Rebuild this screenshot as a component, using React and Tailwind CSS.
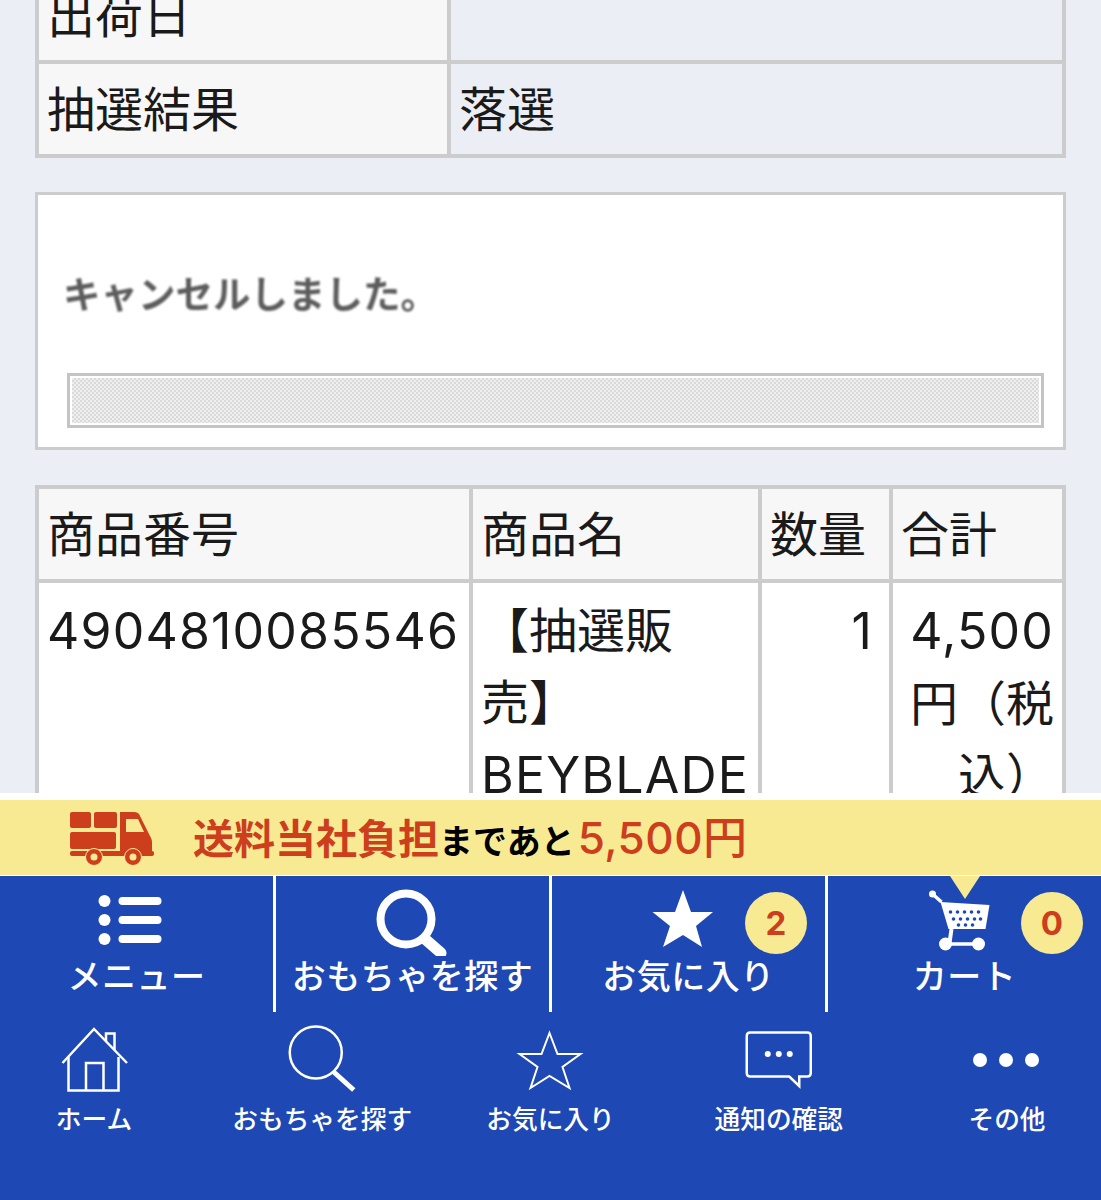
import React from 'react';

const cell = 'border-[4px] border-[#cccccc] px-[8px] align-top';
const latin = 'text-[50px] tracking-[1.2px]';

function TruckIcon() {
    return (
        <svg width="90" height="56" viewBox="67 810 90 56" fill="#cc3e1c">
            <rect x="70" y="812" width="21" height="16" rx="2" />
            <rect x="94" y="812" width="23" height="16" rx="2" />
            <rect x="70" y="832" width="46" height="17" rx="2" />
            <path d="M120 812h14c3 0 5 1 6 4l11 22c1 2 1 4 1 6v9h-32zM126 819v13h18l-6-13z" fillRule="evenodd" />
            <rect x="70" y="851" width="84" height="5" rx="2" />
            <circle cx="94" cy="857" r="8.5" fill="#cc3e1c" stroke="#f7ea93" strokeWidth="1" />
            <circle cx="94" cy="857" r="3.5" fill="#f7ea93" />
            <circle cx="133" cy="857" r="8.5" fill="#cc3e1c" stroke="#f7ea93" strokeWidth="1" />
            <circle cx="133" cy="857" r="3.5" fill="#f7ea93" />
        </svg>
    );
}

function ListIcon() {
    return (
        <svg width="80" height="76" viewBox="96.5 880 80 76" fill="white">
            <circle cx="104" cy="901" r="6" />
            <circle cx="104" cy="920" r="6" />
            <circle cx="104" cy="939" r="6" />
            <rect x="118" y="897" width="43" height="8" rx="4" />
            <rect x="118" y="916" width="43" height="8" rx="4" />
            <rect x="118" y="935" width="43" height="8" rx="4" />
        </svg>
    );
}

function SolidSearchIcon() {
    return (
        <svg width="80" height="76" viewBox="373 880 80 76" fill="none" stroke="white">
            <circle cx="406" cy="919" r="25.5" strokeWidth="8" />
            <path d="M425 939L441 953" strokeWidth="11" strokeLinecap="round" />
        </svg>
    );
}

function SolidStarIcon() {
    return (
        <svg width="80" height="76" viewBox="649 880 80 76" fill="white">
            <path d="M683 890L691 912L713 912L696 926L702 947L683 935L663 947L670 926L652.5 912L675 912Z" />
        </svg>
    );
}

function CartIcon() {
    const holes = [
        [950, 912], [957, 912], [964, 912], [971, 912], [978, 912],
        [953, 919], [960, 919], [967, 919], [974, 919], [980, 919],
        [958, 925], [965, 925], [972, 925],
    ];
    return (
        <svg width="80" height="76" viewBox="924.5 880 80 76" fill="white">
            <circle cx="932" cy="894" r="3.5" />
            <path d="M932 894L941 902" stroke="white" strokeWidth="3.5" fill="none" />
            <path d="M940 902L989 905L985 929L948 929Z" />
            <path d="M951 929L949 943" stroke="white" strokeWidth="4" fill="none" />
            <path d="M945 944H977" stroke="white" strokeWidth="3.5" fill="none" />
            <circle cx="945" cy="944" r="6.5" />
            <circle cx="978" cy="944" r="6.5" />
            {holes.map(([cx, cy], index) => (
                <circle key={index} cx={cx} cy={cy} r="1.8" fill="#1e48b3" />
            ))}
        </svg>
    );
}

function HomeIcon() {
    return (
        <svg width="80" height="70" viewBox="54 1024 80 70" fill="none" stroke="white" strokeWidth="2.5">
            <path d="M62.5 1063L94 1029L127 1063" />
            <path d="M68.5 1057V1090.5H118.5V1057" />
            <path d="M86 1090V1063H103.5V1090" />
            <path d="M106 1041V1033.5H114.5V1050" />
        </svg>
    );
}

function OutlineSearchIcon() {
    return (
        <svg width="80" height="70" viewBox="282.25 1024 80 70" fill="none" stroke="white">
            <circle cx="316" cy="1052.5" r="26" strokeWidth="2.5" />
            <path d="M334 1072L354 1090" strokeWidth="5" />
        </svg>
    );
}

function OutlineStarIcon() {
    return (
        <svg width="80" height="70" viewBox="510.5 1024 80 70" fill="none" stroke="white" strokeWidth="2">
            <path d="M549 1033L557 1054L580 1054L562 1067L569 1088L549 1076L530 1088L537 1067L519 1054L541 1054Z" />
        </svg>
    );
}

function ChatIcon() {
    return (
        <svg width="80" height="70" viewBox="738.75 1024 80 70" fill="none" stroke="white" strokeWidth="2.5">
            <path d="M750 1032.5H807Q810.5 1032.5 810.5 1036V1073Q810.5 1076.5 807 1076.5H799V1086L789 1076.5H750Q746.5 1076.5 746.5 1073V1036Q746.5 1032.5 750 1032.5Z" />
            <circle cx="767.5" cy="1054" r="3" fill="white" stroke="none" />
            <circle cx="778.5" cy="1054" r="3" fill="white" stroke="none" />
            <circle cx="789.5" cy="1054" r="3" fill="white" stroke="none" />
        </svg>
    );
}

function DotsIcon() {
    return (
        <svg width="80" height="70" viewBox="967 1024 80 70" fill="white">
            <circle cx="980" cy="1060" r="7" />
            <circle cx="1006" cy="1060" r="7" />
            <circle cx="1032" cy="1060" r="7" />
        </svg>
    );
}

const topNav = [
    { label: 'メニュー', icon: <ListIcon /> },
    { label: 'おもちゃを探す', icon: <SolidSearchIcon /> },
    { label: 'お気に入り', icon: <SolidStarIcon />, badge: 2 },
    { label: 'カート', icon: <CartIcon />, badge: 0 },
];

const bottomNav = [
    { label: 'ホーム', icon: <HomeIcon /> },
    { label: 'おもちゃを探す', icon: <OutlineSearchIcon /> },
    { label: 'お気に入り', icon: <OutlineStarIcon /> },
    { label: '通知の確認', icon: <ChatIcon /> },
    { label: 'その他', icon: <DotsIcon /> },
];

function App() {
    return (
        <div className="flex h-[1200px] w-[1101px] flex-col overflow-hidden bg-[#ebeff5] font-['Inter','Noto_Sans_CJK_JP',sans-serif] text-[48px] leading-[72px] text-[#1a1a1a]">
            <main className="min-h-0 flex-1 overflow-hidden px-[35px]">
                <table className="-mt-[34px] w-[1031px] table-fixed border-collapse">
                    <colgroup>
                        <col className="w-[412px]" />
                        <col />
                    </colgroup>
                    <tbody>
                        <tr className="h-[94px]">
                            <td className={`${cell} bg-[#f7f7f7] pt-[10px]`}>出荷日</td>
                            <td className={cell}></td>
                        </tr>
                        <tr className="h-[94px]">
                            <td className={`${cell} bg-[#f7f7f7] pt-[10px]`}>抽選結果</td>
                            <td className={`${cell} pt-[10px]`}>落選</td>
                        </tr>
                    </tbody>
                </table>

                <section className="mt-[34px] flex h-[258px] w-[1031px] flex-col border-[3px] border-[#cccccc] bg-white px-[29px]">
                    <p className="mt-[77px] -ml-[4px] text-[37.5px] leading-[46px] font-bold text-[#5c5c5c] blur-[1px]">キャンセルしました。</p>
                    <div className="mt-[55px] h-[55px] w-[977px] border-[3px] border-[#c4c4c4] bg-white p-[2px]">
                        <div className="h-full bg-[#e4e4e4] bg-[repeating-conic-gradient(#d9d9d9_0_25%,#f0f0f0_0_50%)] bg-size-[4px_4px]"></div>
                    </div>
                </section>

                <table className="mt-[35px] w-[1031px] table-fixed border-collapse">
                    <colgroup>
                        <col className="w-[434px]" />
                        <col className="w-[289px]" />
                        <col className="w-[131px]" />
                        <col />
                    </colgroup>
                    <tbody>
                        <tr className="h-[94px]">
                            <td className={`${cell} bg-[#f7f7f7] pt-[10px]`}>商品番号</td>
                            <td className={`${cell} bg-[#f7f7f7] pt-[10px]`}>商品名</td>
                            <td className={`${cell} bg-[#f7f7f7] pt-[10px]`}>数量</td>
                            <td className={`${cell} bg-[#f7f7f7] pt-[10px]`}>合計</td>
                        </tr>
                        <tr>
                            <td className={`${cell} bg-white pt-[12px]`}><span className={latin}>4904810085546</span></td>
                            <td className={`${cell} bg-white pt-[12px]`}>【抽選販<br />売】<br /><span className={latin}>BEYBLADE</span></td>
                            <td className={`${cell} bg-white pt-[12px] pr-[16px] text-right`}><span className={latin}>1</span></td>
                            <td className={`${cell} bg-white pt-[12px] text-right`}><span className={latin}>4,500</span><br />円（税<br />込）</td>
                        </tr>
                    </tbody>
                </table>
            </main>

            <footer className="relative bg-white pt-[7px]">
                <div className="flex h-[75px] items-center bg-[#f7ea93] pl-[67px]">
                    <TruckIcon />
                    <p className="ml-[36px] flex items-baseline font-bold text-[#cc3e1c]">
                        <span className="text-[41px] leading-none">送料当社負担</span>
                        <span className="text-[34px] leading-none text-black">まであと</span>
                        <span className="ml-[3px] text-[44px] leading-none font-medium tracking-[0.5px]">5,500円</span>
                    </p>
                </div>
                <div className="mt-px flex h-[136px] bg-[#1e48b3]">
                    {topNav.map((item, index) => (
                        <div key={item.label} className={`relative flex flex-col items-center pt-[4px] ${index === 0 ? 'w-[273px]' : 'w-[276px] border-l-[3px] border-white'}`}>
                            {item.icon}
                            <span className="text-[34px] leading-[42px] font-medium tracking-[0.5px] text-white">{item.label}</span>
                            {item.badge !== undefined && (
                                <span className="absolute top-[16px] right-[18px] flex size-[62px] items-center justify-center rounded-full bg-[#f7ea93] text-[33px] leading-none font-bold text-[#cc3e1c]">{item.badge}</span>
                            )}
                        </div>
                    ))}
                </div>
                <div className="absolute top-[83px] left-[950px] h-0 w-0 border-x-[15px] border-t-[23px] border-x-transparent border-t-[#f7ea93]"></div>
                <nav className="flex h-[188px] justify-between bg-[#1e48b3] pt-[12px]">
                    {bottomNav.map((item) => (
                        <div key={item.label} className="flex w-[188px] flex-col items-center">
                            {item.icon}
                            <span className="mt-[8px] text-[25.7px] leading-[36px] font-medium text-white">{item.label}</span>
                        </div>
                    ))}
                </nav>
            </footer>
        </div>
    );
}

export default App;
